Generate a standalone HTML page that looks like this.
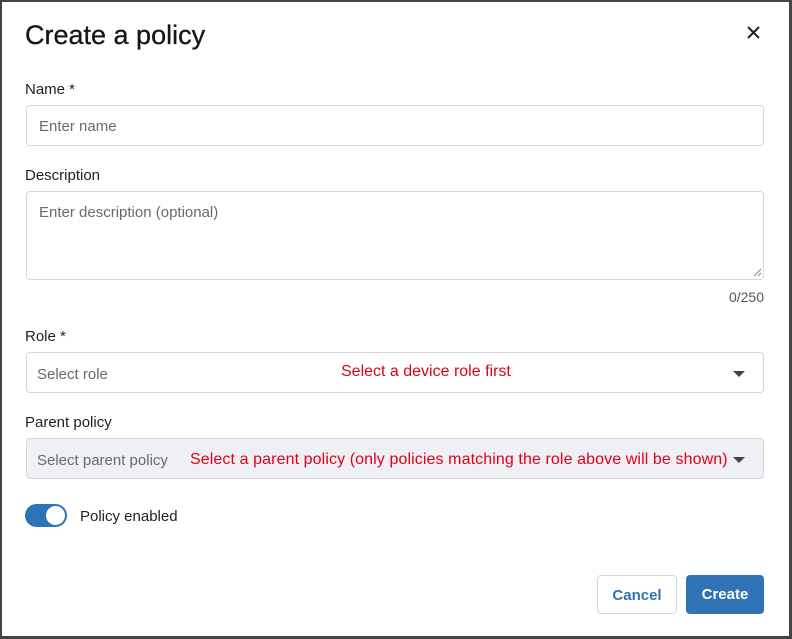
<!DOCTYPE html>
<html><head><style>
*{box-sizing:border-box;margin:0;padding:0}
body{width:792px;height:639px;background:#fff;font-family:"Liberation Sans",sans-serif;position:relative;overflow:hidden}
.frame{position:absolute;left:0;top:0;width:792px;height:639px;border:2px solid #444;border-right-width:3px;border-bottom-width:3px}
.abs{position:absolute}
.lbl{position:absolute;left:25px;font-size:15px;color:#1f1f1f}
.box{position:absolute;left:26px;width:738px;border:1px solid #d4d7dc;border-radius:4px;background:#fff}
.ph{position:absolute;font-size:15px;color:#656b73}
.red{position:absolute;font-size:16px;color:#e0001b}
.caret{position:absolute;width:0;height:0;border-left:6px solid transparent;border-right:6px solid transparent;border-top:6px solid #444}
</style></head><body>
<div class="frame"></div>
<div class="abs" style="left:25px;top:20px;font-size:27px;color:#161616;-webkit-text-stroke:0.3px #161616">Create a policy</div>
<svg class="abs" style="left:747px;top:26px" width="13" height="13"><path d="M1 1L12 12M12 1L1 12" stroke="#222" stroke-width="2"/></svg>

<div class="lbl" style="top:81px">Name *</div>
<div class="box" style="top:105px;height:41px"></div>
<div class="ph" style="left:39px;top:118px">Enter name</div>

<div class="lbl" style="top:167px">Description</div>
<div class="box" style="top:191px;height:89px"></div>
<div class="ph" style="left:39px;top:204px">Enter description (optional)</div>
<svg class="abs" style="left:753px;top:268px" width="9" height="9"><path d="M1 8L8 1M5 8L8 5" stroke="#888" stroke-width="1"/></svg>
<div class="abs" style="left:721px;top:289px;width:43px;text-align:right;font-size:14px;color:#555">0/250</div>

<div class="lbl" style="top:328px">Role *</div>
<div class="box" style="top:352px;height:41px"></div>
<div class="ph" style="left:37px;top:366px">Select role</div>
<div class="red" style="left:341px;top:363px">Select a device role first</div>
<div class="caret" style="left:733px;top:371px"></div>

<div class="lbl" style="top:414px">Parent policy</div>
<div class="box" style="top:438px;height:41px;background:#eef0f3"></div>
<div class="ph" style="left:37px;top:452px">Select parent policy</div>
<div class="red" style="left:190px;top:451px;letter-spacing:0.1px">Select a parent policy (only policies matching the role above will be shown)</div>
<div class="caret" style="left:733px;top:457px"></div>

<div class="abs" style="left:25px;top:504px;width:42px;height:23px;border-radius:12px;background:#2f73b6"></div>
<div class="abs" style="left:46px;top:506px;width:19px;height:19px;border-radius:50%;background:#fff"></div>
<div class="abs" style="left:80px;top:508px;font-size:15px;color:#222">Policy enabled</div>

<div class="abs" style="left:597px;top:575px;width:80px;height:39px;border:1px solid #d4d7dc;border-radius:4px;color:#2f73b6;font-size:15px;font-weight:bold;text-align:center;line-height:39px">Cancel</div>
<div class="abs" style="left:686px;top:575px;width:78px;height:39px;background:#2f73b6;border-radius:4px;color:#fff;font-size:15px;font-weight:bold;text-align:center;line-height:40px">Create</div>
</body></html>
